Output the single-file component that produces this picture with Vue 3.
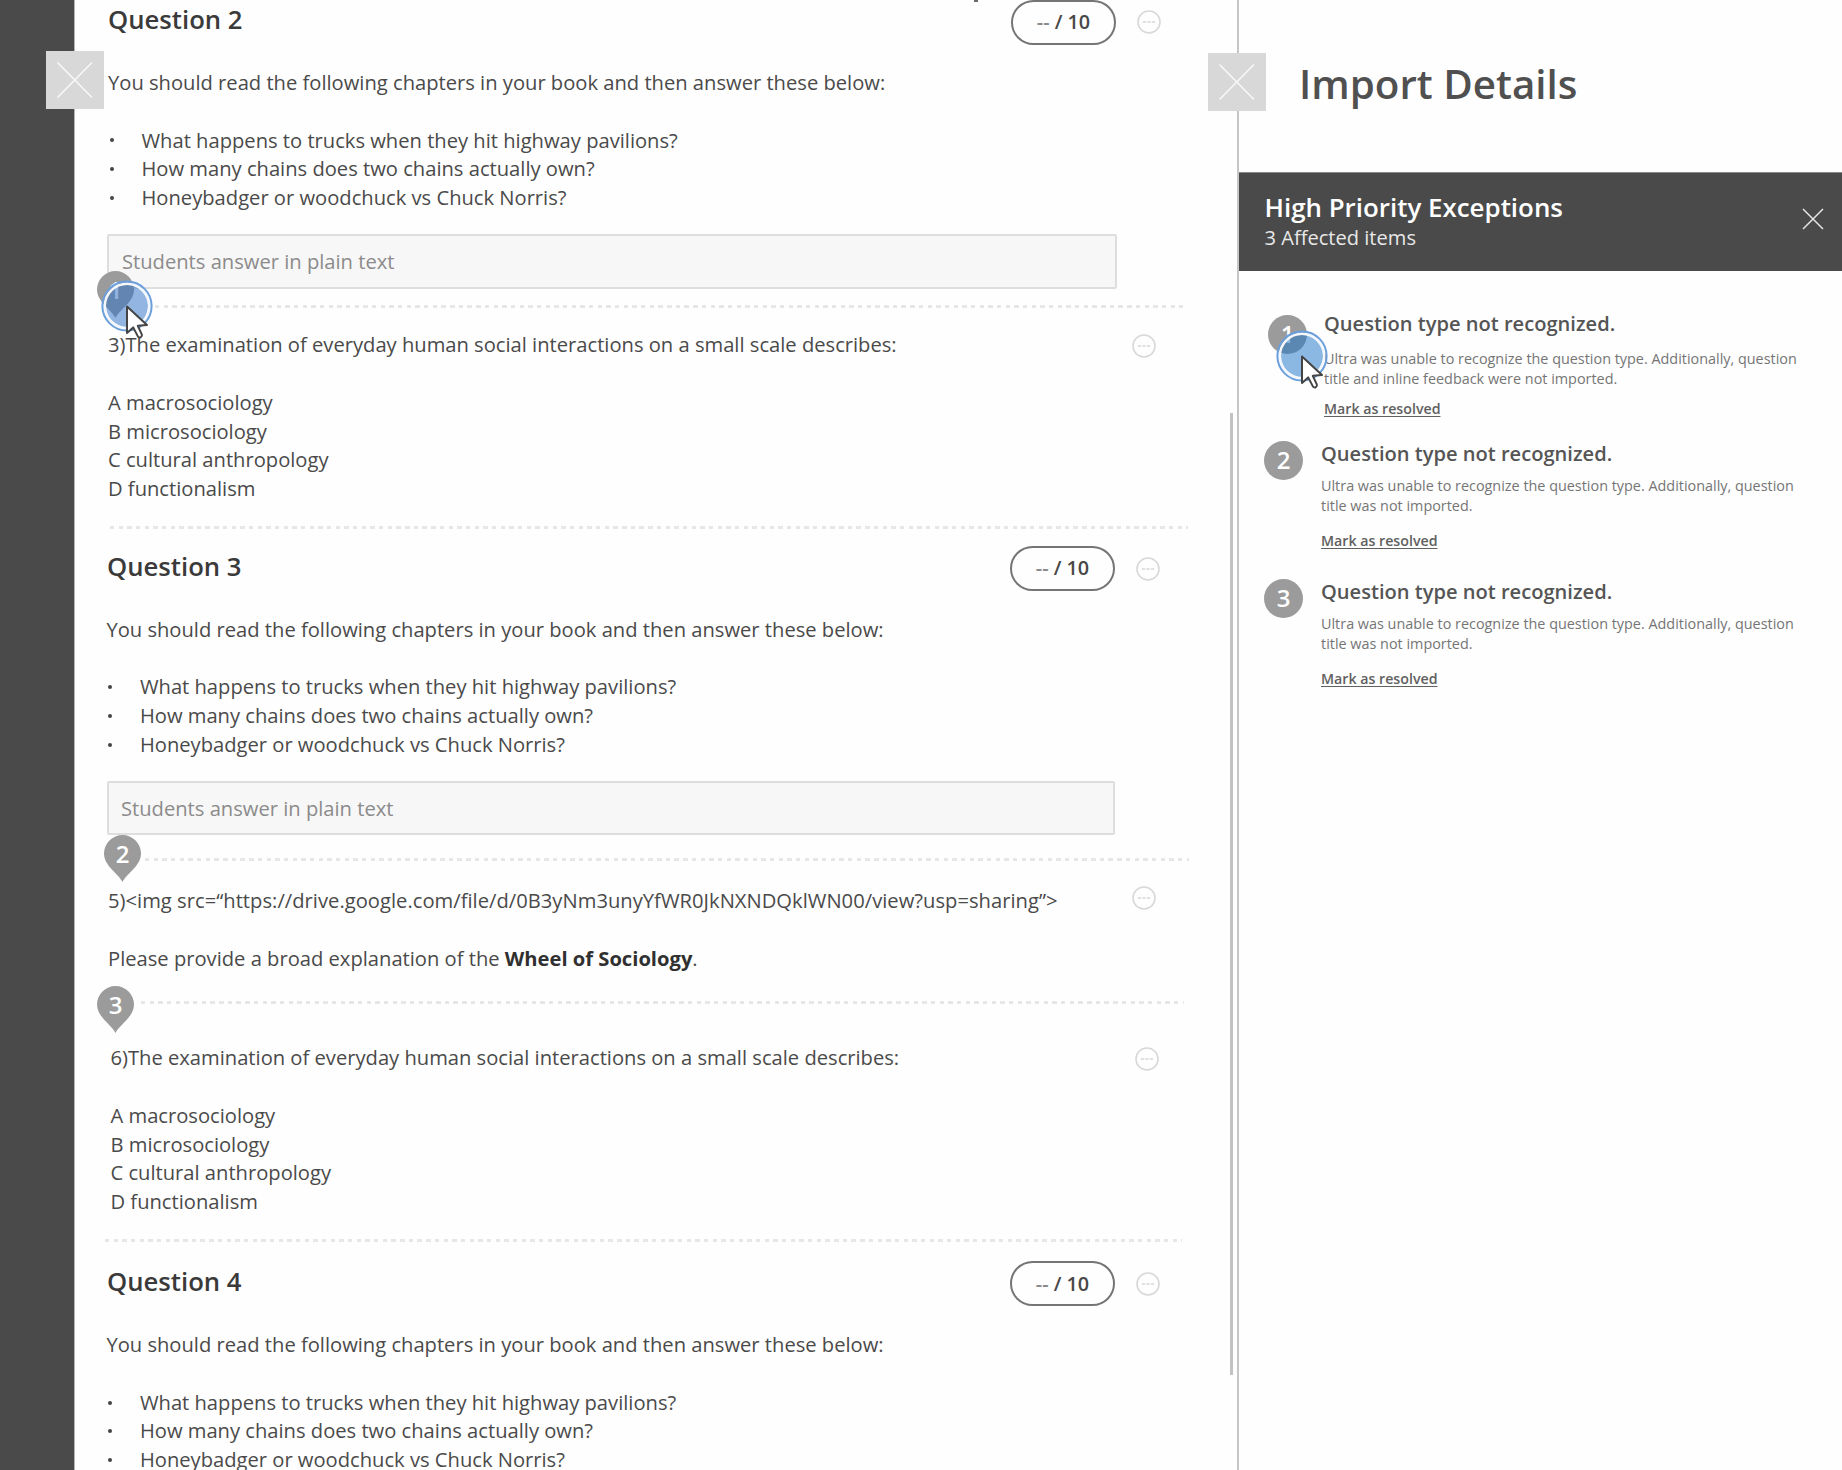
<script setup>
const chapters = [
  'What happens to trucks when they hit highway pavilions?',
  'How many chains does two chains actually own?',
  'Honeybadger or woodchuck vs Chuck Norris?',
]
const options = ['A macrosociology', 'B microsociology', 'C cultural anthropology', 'D functionalism']

const blocks = [
  { type: 'question', cls: 'q2', title: 'Question 2', answer: true },
  { type: 'divider', cls: 'd1', pin: 1, click: true },
  { type: 'choice', cls: 'c3', text: '3)The examination of everyday human social interactions on a small scale describes:' },
  { type: 'divider', cls: 'd2' },
  { type: 'question', cls: 'q3', title: 'Question 3', answer: true },
  { type: 'divider', cls: 'd3', pin: 2 },
  { type: 'essay', cls: 'c5', text: '5)<img src=“https://drive.google.com/file/d/0B3yNm3unyYfWR0JkNXNDQklWN00/view?usp=sharing”>' },
  { type: 'divider', cls: 'd4', pin: 3 },
  { type: 'choice', cls: 'c6', text: '6)The examination of everyday human social interactions on a small scale describes:' },
  { type: 'divider', cls: 'd5' },
  { type: 'question', cls: 'q4', title: 'Question 4', answer: false },
]

const exceptions = [
  { n: 1, lines: ['Ultra was unable to recognize the question type. Additionally, question', 'title and inline feedback were not imported.'], click: true },
  { n: 2, lines: ['Ultra was unable to recognize the question type. Additionally, question', 'title was not imported.'] },
  { n: 3, lines: ['Ultra was unable to recognize the question type. Additionally, question', 'title was not imported.'] },
]
</script>

<template>
  <div class="app">
    <div class="rail">
      <button class="tab">
        <svg viewBox="0 0 58 58"><path d="M11.5 11.5L46 46.5M46 11.5L11.5 46.5" /></svg>
      </button>
    </div>

    <main class="doc">
      <i class="clip"></i>
      <template v-for="b in blocks" :key="b.cls">
        <section v-if="b.type === 'question'" :class="['question', b.cls]">
          <header class="head">
            <h2>{{ b.title }}</h2>
            <span class="pill"><span class="dashes">--</span> / 10</span>
            <svg class="more" viewBox="0 0 24 24"><circle cx="12" cy="12" r="11" /><path d="M5.8 12h3.4M10.3 12h3.4M14.8 12h3.4" /></svg>
          </header>
          <p class="intro">You should read the following chapters in your book and then answer these below:</p>
          <ul>
            <li v-for="c in chapters" :key="c"><i class="bullet"></i><span>{{ c }}</span></li>
          </ul>
          <div v-if="b.answer" class="answer">Students answer in plain text</div>
        </section>

        <div v-else-if="b.type === 'divider'" :class="['divider', b.cls]">
          <span v-if="b.pin" class="pin">
            <svg viewBox="0 0 37 47"><path d="M18.5 47C14 38 0 31 0 18.5a18.5 18.5 0 0 1 37 0C37 31 23 38 18.5 47z" /></svg>
            <b>{{ b.pin }}</b>
          </span>
          <svg v-if="b.click" class="click" viewBox="0 0 52 60">
            <circle class="fill" cx="26" cy="26" r="21" />
            <circle class="gap" cx="26" cy="26" r="22.2" />
            <circle class="ring" cx="26" cy="26" r="24.6" />
            <path class="arrow" d="M26 26.5V53l6.2-5.6 4.8 9.2c1.8 1.8 4.6.2 3.8-2.2l-4-8.6 9.2-.8z" />
          </svg>
        </div>

        <section v-else :class="['item', b.cls]">
          <div class="row">
            <p>{{ b.text }}</p>
            <svg class="more" viewBox="0 0 24 24"><circle cx="12" cy="12" r="11" /><path d="M5.8 12h3.4M10.3 12h3.4M14.8 12h3.4" /></svg>
          </div>
          <div v-if="b.type === 'choice'" class="options">
            <p v-for="o in options" :key="o">{{ o }}</p>
          </div>
          <p v-else class="essay">Please provide a broad explanation of the <strong>Wheel of Sociology</strong>.</p>
        </section>
      </template>
      <div class="scroll"></div>
    </main>

    <aside class="panel">
      <button class="tab">
        <svg viewBox="0 0 58 58"><path d="M11.5 11.5L46 46.5M46 11.5L11.5 46.5" /></svg>
      </button>
      <h1>Import Details</h1>
      <header class="bar">
        <div>
          <h3>High Priority Exceptions</h3>
          <p>3 Affected items</p>
        </div>
        <svg viewBox="0 0 22 22"><path d="M1 1l20 20M21 1L1 21" /></svg>
      </header>
      <ul class="exceptions">
        <li v-for="e in exceptions" :key="e.n" :class="'e' + e.n">
          <span class="num">{{ e.n }}</span>
          <div class="text">
            <h4>Question type not recognized.</h4>
            <p v-for="l in e.lines" :key="l">{{ l }}</p>
            <a>Mark as resolved</a>
          </div>
          <svg v-if="e.click" class="click" viewBox="0 0 52 60">
            <circle class="fill" cx="26" cy="26" r="21" />
            <circle class="gap" cx="26" cy="26" r="22.2" />
            <circle class="ring" cx="26" cy="26" r="24.6" />
            <path class="arrow" d="M26 26.5V53l6.2-5.6 4.8 9.2c1.8 1.8 4.6.2 3.8-2.2l-4-8.6 9.2-.8z" />
          </svg>
        </li>
      </ul>
    </aside>
  </div>
</template>

<style>
body { margin: 0; background: #fefefe; }
</style>

<style scoped>
.app {
  display: flex;
  width: 1842px;
  height: 1470px;
  overflow: hidden;
  background: #fefefe;
  color: #4a4a4a;
  font: 20.16px/28.8px "Open Sans", sans-serif;
}
h1, h2, h3, h4, p, ul { margin: 0; padding: 0; list-style: none; font-weight: 400; white-space: nowrap; }
svg { display: block; fill: none; overflow: visible; }

.rail { position: relative; z-index: 2; width: 74px; flex: none; background: #4a4a4a; border-right: 1px solid #b5b5b5; }
.tab { position: absolute; width: 58px; height: 58px; padding: 0; border: 0; background: #d8d8d8; }
.tab svg { width: 58px; height: 58px; stroke: #f8f8f8; stroke-width: 1.6; }
.rail .tab { left: 46px; top: 51px; }
.panel .tab { left: -31px; top: 53px; }

.doc { position: relative; flex: none; width: 1130px; padding-left: 32px; height: 1470px; }
.clip { position: absolute; left: 899px; top: 0; width: 4px; height: 2px; background: #6a6a6a; }
.scroll { position: absolute; left: 1155px; top: 413px; width: 2.5px; height: 962px; background: #c2c2c2; }

.head { display: flex; align-items: center; height: 45px; }
.head h2 { width: 903px; font-size: 25.7px; font-weight: 600; line-height: 36px; color: #3a3a3a; padding-bottom: 4px; }
.pill {
  box-sizing: border-box; width: 105px; height: 45px; border: 2px solid #757575; border-radius: 23px;
  display: flex; align-items: center; justify-content: center; white-space: pre;
  font-size: 19.8px; font-weight: 600; color: #484848;
}
.dashes { color: #8a8a8a; }
.more { width: 24px; height: 24px; flex: none; stroke: #d8d8d8; stroke-width: 1.6; }
.head .more { margin-left: 20.5px; }
.intro { margin-top: 23.6px; }
.question ul { margin-top: 28.8px; }
.question li { display: flex; align-items: center; height: 28.8px; }
.bullet { width: 4px; height: 4px; border-radius: 50%; background: #444; margin: 1px 27.5px 0 2px; }
.answer {
  box-sizing: border-box; width: 1008px; height: 54px; margin-top: 22.6px; padding: 11px 12px;
  border: 2px solid #dedede; border-radius: 2px; background: #f7f7f7; color: #8b8b8b;
}
.q2 { padding-left: 1px; }
.q2 .head { margin-top: -.2px; }
.q2 .intro { margin-top: 23.1px; }
.q2 .answer { margin-top: 22.2px; height: 55px; margin-left: -1px; width: 1010px; padding-left: 13px; }
.q3 { margin-top: 17.2px; }
.q3 .intro, .q4 .intro { margin-left: -.6px; }
.q3 ul, .q4 ul { margin-left: -.6px; }
.q4 { margin-top: 19.8px; }

.divider { position: relative; height: 3px; }
.divider::before {
  content: ""; display: block; height: 3px;
  background: repeating-linear-gradient(90deg, #e7e7e7 0 4.4px, transparent 4.4px 8.68px);
}
.d1 { margin: 16px 0 0 48px; width: 1028px; }
.d2 { margin: 23px 0 0 3px; width: 1078px; }
.d3 { margin: 23px 0 0 38px; width: 1044px; }
.d4 { margin: 28.3px 0 0 34px; width: 1043px; }
.d5 { margin: 22.7px 0 0 -2px; width: 1077px; }
.pin { position: absolute; width: 37px; height: 47px; }
.pin svg { width: 37px; height: 47px; fill: #9b9b9b; }
.pin b { position: absolute; inset: 0 0 auto; height: 38px; line-height: 38px; text-align: center; color: #fff; font-size: 24px; font-weight: 600; }
.d1 .pin { left: -58px; top: -34px; }
.d3 .pin { left: -41px; top: -23.6px; }
.d4 .pin { left: -44px; top: -14.6px; }
.click { position: absolute; width: 52px; height: 60px; z-index: 3; }
.click .fill { fill: rgba(47, 114, 199, .52); }
.click .gap { stroke: #f4f8fd; stroke-width: 2.4; }
.click .ring { stroke: #6a9fdc; stroke-width: 2; }
.click .arrow { fill: #fff; stroke: #444; stroke-width: 2; stroke-linejoin: round; }
.d1 .click { left: -54px; top: -25px; }
.exceptions .click .fill { fill: rgba(30, 118, 200, .52); }

.row { display: flex; align-items: center; height: 28.8px; }
.row p { width: 1024px; }
.c3 { margin: 22.2px 0 0 1px; }
.c5 { margin: 24.5px 0 0 1px; }
.c5 .row p { letter-spacing: .025px; }
.c6 { margin: 39.6px 0 0 3.5px; }
.c3 .more, .c6 .more { margin-top: 3px; }
.c5 .more { margin-bottom: 5px; }
.options, .essay { margin-top: 28.8px; }
.essay strong { color: #303030; font-weight: 700; }

.panel { position: relative; width: 603px; flex: none; border-left: 2px solid #c6c6c6; }
.panel h1 { height: 172px; box-sizing: border-box; padding: 54px 0 0 60px; font-size: 40.3px; line-height: 60px; font-weight: 600; color: #505050; }
.bar { display: flex; align-items: center; justify-content: space-between; height: 99px; box-sizing: border-box; padding: 0 18.5px 2px 25.5px; background: #4a4a4a; border-top: 1px solid #8c8c8c; color: #e8e8e8; }
.bar h3 { margin-top: -1px; font-size: 25.9px; line-height: 34px; font-weight: 600; color: #fff; }
.bar p { font-size: 20.1px; line-height: 27px; }
.bar svg { width: 22px; height: 22px; margin-bottom: 4px; stroke: #e6e6e6; stroke-width: 1.5; }
.exceptions li { position: relative; display: flex; align-items: flex-start; }
.num { width: 39px; height: 39px; border-radius: 50%; background: #9b9b9b; color: #fff; text-align: center; font-size: 24px; line-height: 38px; font-weight: 600; margin-left: 25px; }
.text { margin-left: 18px; }
.text h4 { margin: -.6px 0 8.1px; font-size: 20.1px; line-height: 28px; font-weight: 600; color: #555; }
.text p { font-size: 14.4px; line-height: 20px; color: #757575; }
.text a { display: block; font-size: 14.2px; line-height: 20px; margin-top: 14.5px; color: #606060; font-weight: 600; text-decoration: underline; text-underline-offset: 2px; }
.e1 { margin-top: 39px; height: 130.5px; }
.e1 .num { margin: 5px 0 0 29px; }
.e1 .text { margin-left: 17px; }
.e1 h4 { margin: 0 0 11px; }
.e1 a { margin-top: 10px; }
.e1 .click { left: 37px; top: 20px; }
.e2, .e3 { height: 138.2px; }
</style>
